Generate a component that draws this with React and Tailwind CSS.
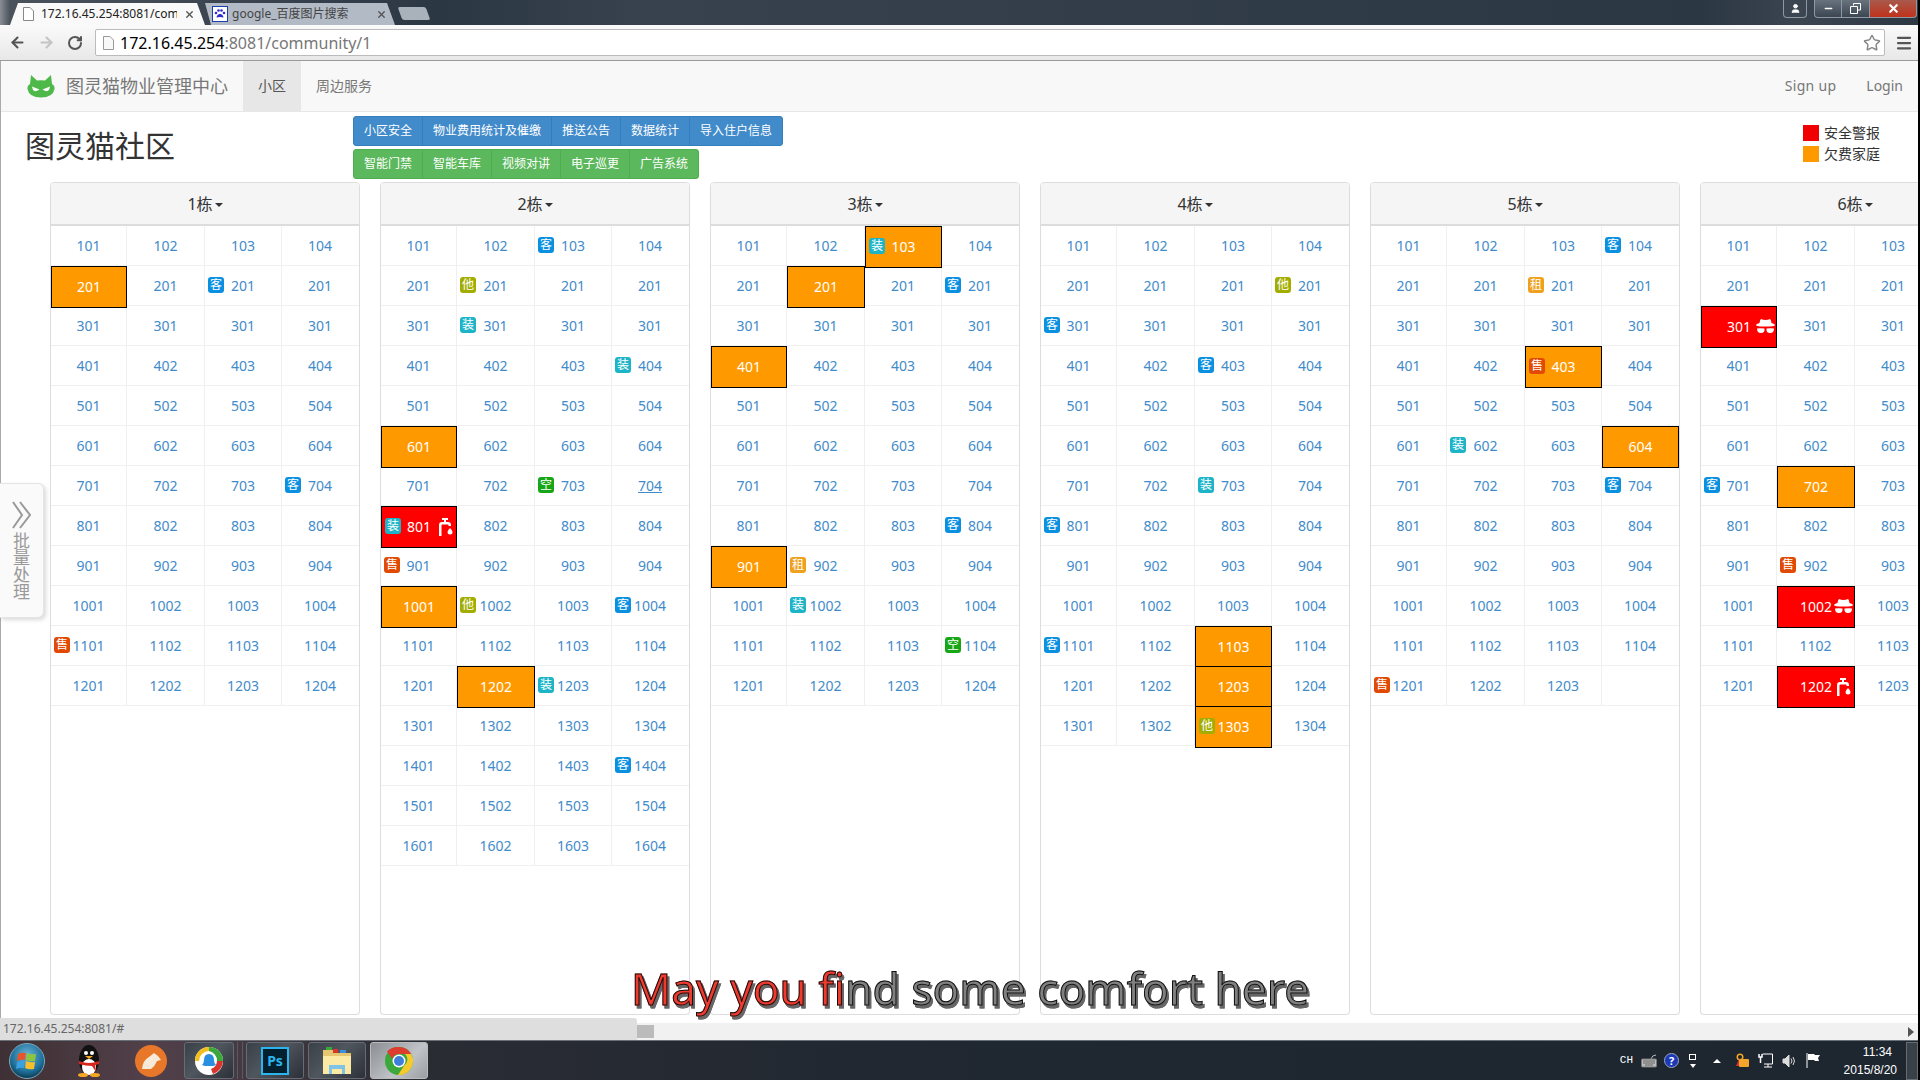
import { ArrowLeft, ArrowRight, RotateCw, Star, Menu, X, Minus, User } from 'lucide-react';

const BADGE = {
  客: 'bg-[#0b8fe0]',
  他: 'bg-[#a2ad00]',
  售: 'bg-[#e04a04]',
  装: 'bg-[#1db4c8]',
  租: 'bg-[#efa01c]',
  空: 'bg-[#16a616]',
};

const BUILDINGS = [
  {
    name: '1栋',
    rows: 12,
    cells: { '2-1': { s: 'o' }, '2-3': { b: '客' }, '7-4': { b: '客' }, '11-1': { b: '售' } },
  },
  {
    name: '2栋',
    rows: 16,
    cells: {
      '1-3': { b: '客' },
      '2-2': { b: '他' },
      '3-2': { b: '装' },
      '4-4': { b: '装' },
      '6-1': { s: 'o' },
      '7-3': { b: '空' },
      '7-4': { u: true },
      '8-1': { s: 'r', b: '装', i: 'tap' },
      '9-1': { b: '售' },
      '10-1': { s: 'o' },
      '10-2': { b: '他' },
      '10-4': { b: '客' },
      '12-2': { s: 'o' },
      '12-3': { b: '装' },
      '14-4': { b: '客' },
    },
  },
  {
    name: '3栋',
    rows: 12,
    cells: {
      '1-3': { s: 'o', b: '装' },
      '2-2': { s: 'o' },
      '2-4': { b: '客' },
      '4-1': { s: 'o' },
      '8-4': { b: '客' },
      '9-1': { s: 'o' },
      '9-2': { b: '租' },
      '10-2': { b: '装' },
      '11-4': { b: '空' },
    },
  },
  {
    name: '4栋',
    rows: 13,
    cells: {
      '2-4': { b: '他' },
      '3-1': { b: '客' },
      '4-3': { b: '客' },
      '7-3': { b: '装' },
      '8-1': { b: '客' },
      '11-1': { b: '客' },
      '11-3': { s: 'o' },
      '12-3': { s: 'o' },
      '13-3': { s: 'o', b: '他' },
    },
  },
  {
    name: '5栋',
    rows: 12,
    cells: {
      '1-4': { b: '客' },
      '2-3': { b: '租' },
      '4-3': { s: 'o', b: '售' },
      '6-2': { b: '装' },
      '6-4': { s: 'o' },
      '7-4': { b: '客' },
      '12-1': { b: '售' },
      '12-4': { empty: true },
    },
  },
  {
    name: '6栋',
    rows: 12,
    cells: {
      '3-1': { s: 'r', i: 'hat' },
      '7-1': { b: '客' },
      '7-2': { s: 'o' },
      '9-2': { b: '售' },
      '10-2': { s: 'r', i: 'hat' },
      '12-2': { s: 'r', i: 'tap' },
    },
  },
];

function roomLabel(r, c) {
  if (r === 1) return 100 + c;
  if (r === 2) return 201;
  if (r === 3) return 301;
  return r * 100 + c;
}

function CatLogo() {
  return (
    <svg width="28" height="23" viewBox="0 0 28 23">
      <path d="M3 9 L4 0 L10 5.500 Q14 5 18 5.500 L24 0 L25 9 Q28 11 27.500 14 Q26 22.500 14 22.500 Q2 22.500 .5 14 Q0 11 3 9Z" fill="#4eb948" />
      <path d="M5 11.500 L12.500 14.500 Q8 17.500 6 15Z M23 11.500 L15.500 14.500 Q20 17.500 22 15Z" fill="#fff" />
    </svg>
  );
}

function TapIcon() {
  return (
    <svg width="14" height="19" viewBox="0 0 14 19" fill="#fff">
      <path d="M0 19V8q0-3 3-3h2V3H3V1h6v2H7v2h2q3 0 3 3v1h-2.500V8q0-.5-.5-.5H3q-.5 0-.5.500v11Z" />
      <path d="M11 11q2.500 2.500 2.500 4a2.500 2.500 0 0 1-5 0q0-1.500 2.500-4Z" />
    </svg>
  );
}

function HatIcon() {
  return (
    <svg width="19" height="15" viewBox="0 0 19 15" fill="#fff">
      <path d="M5 0 Q7 1 9.500 1 Q12 1 14 0 Q15 .5 15.500 4 Q19 5 19 6 Q19 7.500 9.500 7.500 Q0 7.500 0 6 Q0 5 3.500 4 Q4 .5 5 0Z" />
      <path d="M1 9.500q3.500-.5 7.500 0 .5 4.500-3.500 4.500-4 0-4-4.500ZM10.500 9.500q4-.5 7.500 0 0 4.500-4 4.500t-3.500-4.500Z" />
    </svg>
  );
}

function Room({ row, col, cell }) {
  const { s, b, i, u, empty } = cell || {};
  const tone = s === 'o' ? 'bg-[#ff9900]' : s === 'r' ? 'bg-[#ff0000]' : '';
  const filled = s === 'o' || s === 'r';

  return (
    <div
      className={
        filled
          ? `relative z-10 h-[42px] -mb-[2px] flex items-center justify-center border border-black text-white ${tone}`
          : 'relative h-[39px] flex items-center justify-center border-r border-[#f0f0f0] text-[#428bca] last:border-r-transparent'
      }
    >
      {b && (
        <span
          className={`absolute left-[3px] top-[11px] w-4 h-4 rounded-[3px] flex items-center justify-center text-white text-xs leading-none ${BADGE[b]}`}
        >
          {b}
        </span>
      )}
      {!empty && <span className={u ? 'underline' : ''}>{roomLabel(row, col)}</span>}
      {i === 'tap' && (
        <span className="absolute right-[3px] top-[10px]">
          <TapIcon />
        </span>
      )}
      {i === 'hat' && (
        <span className="absolute right-[1px] top-[12px]">
          <HatIcon />
        </span>
      )}
    </div>
  );
}

function BuildingPanel({ building }) {
  const rows = Array.from({ length: building.rows }, (_, n) => n + 1);

  return (
    <div className="w-[310px] h-[833px] shrink-0 border border-[#ddd] rounded-[4px] bg-white shadow-[0_1px_1px_rgba(0,0,0,0.05)]">
      <div className="h-[43px] bg-[#f5f5f5] border-b-2 border-[#ddd] rounded-t-[3px] flex items-center justify-center text-base text-[#333]">
        {building.name}
        <span className="ml-0.5 mt-0.5 w-0 h-0 border-x-4 border-x-transparent border-t-4 border-t-[#333]" />
      </div>
      {rows.map((r) => (
        <div key={r} className="grid grid-cols-[76px_78px_77px_77px] h-10 border-b border-[#f0f0f0] text-sm">
          {[1, 2, 3, 4].map((c) => (
            <Room key={c} row={r} col={c} cell={building.cells[`${r}-${c}`]} />
          ))}
        </div>
      ))}
    </div>
  );
}

function ActionGroup({ items, tone }) {
  return (
    <div className="flex">
      {items.map((label) => (
        <button
          key={label}
          className={`h-[30px] px-[10px] text-xs text-white border -ml-px first:ml-0 first:rounded-l-[3px] last:rounded-r-[3px] ${tone}`}
        >
          {label}
        </button>
      ))}
    </div>
  );
}

function TabBar() {
  return (
    <div className="relative h-[25px] shrink-0 flex bg-[linear-gradient(90deg,#8a8f96_0,#4a525c_10px,#2c3744_440px,#37424e_640px,#2c3744_1700px,#3a4550_1800px,#2c3744_1920px)]">
      <div className="ml-[10px] mt-[3px] w-[195px] h-[22px] flex items-center gap-[7px] pl-[13px] pr-[10px] bg-[#f9f9f9] text-xs text-[#222] [clip-path:polygon(8px_0,calc(100%-8px)_0,100%_100%,0_100%)]">
        <svg width="11" height="14" viewBox="0 0 11 14" className="shrink-0">
          <path d="M.5.500h6.500l3.500 3.500v9.500H.5Z" fill="#fff" stroke="#888" />
        </svg>
        <span className="w-[136px] overflow-hidden whitespace-nowrap">172.16.45.254:8081/com</span>
        <X size={11} strokeWidth={3} className="text-[#555] shrink-0" />
      </div>
      <div className="mt-[3px] w-[190px] h-[22px] flex items-center pl-[7px] pr-[8px] bg-[#b2bac6] text-xs text-[#444] [clip-path:polygon(0_0,calc(100%-8px)_0,100%_100%,6px_100%)]">
        <svg width="16" height="16" viewBox="0 0 16 16" className="shrink-0">
          <rect x=".5" y=".5" width="15" height="15" fill="#fff" stroke="#1c3fb0" />
          <path d="M8 8q3 0 3.500 3.500Q8 10.500 4.500 11.500 5 8 8 8Z" fill="#2a2ad0" />
          <circle cx="4" cy="7" r="1.300" fill="#2a2ad0" />
          <circle cx="6.500" cy="4.500" r="1.300" fill="#2a2ad0" />
          <circle cx="9.500" cy="4.500" r="1.300" fill="#2a2ad0" />
          <circle cx="12" cy="7" r="1.300" fill="#2a2ad0" />
        </svg>
        <span className="ml-[4px] flex-1 whitespace-nowrap">google_百度图片搜索</span>
        <X size={11} strokeWidth={3} className="text-[#555] shrink-0" />
      </div>
      <div className="ml-[5px] mt-[7px] w-[28px] h-[13px] bg-[#a9b1ba] rounded-[2px] skew-x-[20deg]" />
      <div className="absolute right-[1px] top-0 flex items-start text-white">
        <div className="w-[24px] h-[18px] mr-[7px] border border-t-0 border-[#8e98a2] rounded-b-[4px] flex items-center justify-center bg-[#3b4652]">
          <User size={11} fill="#fff" />
        </div>
        <div className="w-[28px] h-[18px] border border-t-0 border-[#8e98a2] rounded-bl-[4px] flex items-center justify-center bg-[linear-gradient(#69737e,#3b4652)]">
          <Minus size={11} strokeWidth={3} />
        </div>
        <div className="w-[27px] h-[18px] border-b border-[#8e98a2] flex items-center justify-center bg-[linear-gradient(#69737e,#3b4652)]">
          <svg width="11" height="11" viewBox="0 0 11 11" fill="none" stroke="#fff">
            <path d="M3.500 2.500V.5h7v6.500H8" />
            <path d="M.5 3.500h7v7h-7Z" />
          </svg>
        </div>
        <div className="w-[48px] h-[18px] border border-t-0 border-[#8e98a2] rounded-br-[4px] flex items-center justify-center bg-[linear-gradient(#a85a4c,#c0321c)]">
          <X size={13} strokeWidth={4} />
        </div>
      </div>
    </div>
  );
}

function Toolbar() {
  return (
    <div className="h-[36px] shrink-0 flex items-center bg-[linear-gradient(#fafafa,#e8e8e8)] border-b border-[#9a9a9a]">
      <div className="w-[95px] flex items-center pl-[9px] gap-[12px] shrink-0">
        <ArrowLeft size={17} strokeWidth={3} className="text-[#555]" />
        <ArrowRight size={17} strokeWidth={3} className="text-[#c4c4c4]" />
        <RotateCw size={16} strokeWidth={3} className="text-[#555]" />
      </div>
      <div className="w-[1790px] h-[27px] flex items-center pl-[7px] pr-[3px] bg-white border border-[#bbb] rounded-[2px] text-base leading-none">
        <svg width="11" height="14" viewBox="0 0 11 14" className="shrink-0">
          <path d="M.5.500h6.500l3.500 3.500v9.500H.5Z" fill="#f8f8f8" stroke="#999" />
        </svg>
        <span className="ml-[6px] text-black">172.16.45.254</span>
        <span className="text-[#777]">:8081/community/1</span>
        <Star size={18} className="ml-auto text-[#888]" />
      </div>
      <Menu size={18} strokeWidth={3} className="ml-[10px] text-[#555]" />
    </div>
  );
}

function Navbar() {
  return (
    <nav className="h-[51px] shrink-0 flex items-stretch bg-[#f8f8f8] border-b border-[#e7e7e7] text-sm text-[#777]">
      <div className="flex items-center pl-[26px] w-[242px]">
        <CatLogo />
        <span className="ml-[11px] text-lg whitespace-nowrap">图灵猫物业管理中心</span>
      </div>
      <a className="px-[15px] flex items-center bg-[#e7e7e7] text-[#555]">小区</a>
      <a className="px-[15px] flex items-center">周边服务</a>
      <a className="ml-auto px-[15px] flex items-center tracking-[0.3px]">Sign up</a>
      <a className="px-[15px] flex items-center">Login</a>
    </nav>
  );
}

function PageHead() {
  return (
    <div className="h-[70px] shrink-0 flex">
      <h1 className="w-[352px] pl-[24px] pt-[14px] text-[30px] leading-[40px] text-[#333]">图灵猫社区</h1>
      <div className="pt-[4px] flex flex-col gap-[3px]">
        <ActionGroup
          tone="bg-[#428bca] border-[#357ebd]"
          items={['小区安全', '物业费用统计及催缴', '推送公告', '数据统计', '导入住户信息']}
        />
        <ActionGroup
          tone="bg-[#5cb85c] border-[#4cae4c]"
          items={['智能门禁', '智能车库', '视频对讲', '电子巡更', '广告系统']}
        />
      </div>
      <div className="ml-auto w-[115px] pt-[13px] text-sm text-[#333] flex flex-col gap-[5px]">
        <div className="flex items-center gap-[5px] h-4">
          <span className="w-4 h-4 bg-[#f00000]" />
          安全警报
        </div>
        <div className="flex items-center gap-[5px] h-4">
          <span className="w-4 h-4 bg-[#ff9900]" />
          欠费家庭
        </div>
      </div>
    </div>
  );
}

function Tile({ active, children, className = '' }) {
  return (
    <div
      className={`h-[37px] flex items-center justify-center rounded-[3px] border ${
        active
          ? 'border-[#bbb] bg-[linear-gradient(135deg,#8a8e92,#c0c4c8_60%,#9a9ea2)]'
          : 'border-[#666c74] bg-[linear-gradient(135deg,#3a4048,#50565e_45%,#2c3038)]'
      } ${className}`}
    >
      {children}
    </div>
  );
}

function Taskbar() {
  return (
    <div className="h-10 shrink-0 flex items-center bg-[linear-gradient(90deg,#3e3034_0,#52404a_150px,#2a2c34_420px,#1f2730_1000px,#1e2630_1920px)] border-t border-[#6a7078]">
      <svg width="36" height="36" viewBox="0 0 36 36" className="ml-[9px] shrink-0">
        <defs>
          <radialGradient id="orb" cx="50%" cy="35%" r="65%">
            <stop offset="0%" stopColor="#6fb6d8" />
            <stop offset="70%" stopColor="#1d6f9a" />
            <stop offset="100%" stopColor="#0c3a50" />
          </radialGradient>
        </defs>
        <circle cx="18" cy="18" r="17.500" fill="url(#orb)" stroke="#7fa8bc" />
        <path d="M9 11q4-2 8-1l-1 7q-4-1-8 1Z" fill="#e8552c" />
        <path d="M18 10q4 2 9 1l-1 7q-5 1-9-1Z" fill="#8cc63f" />
        <path d="M8 19q4-2 8-1l-1 7q-4-1-8 1Z" fill="#3aa0e0" />
        <path d="M17 18q4 2 9 1l-1 7q-5 1-9-1Z" fill="#f6c02c" />
      </svg>
      <svg width="28" height="33" viewBox="0 0 28 33" className="ml-[30px] shrink-0">
        <ellipse cx="14" cy="16" rx="10" ry="15" fill="#111" />
        <ellipse cx="14" cy="23" rx="7" ry="8" fill="#fff" />
        <circle cx="11" cy="9" r="2" fill="#fff" />
        <circle cx="17" cy="9" r="2" fill="#fff" />
        <path d="M10 12h8l-4 3Z" fill="#f5a623" />
        <path d="M4 17q10 4 20 0v3q-3 1-4 1l1 7-4-6q-6 0-13-2Z" fill="#d8261c" />
        <ellipse cx="8" cy="31" rx="5" ry="2" fill="#f5a623" />
        <ellipse cx="20" cy="31" rx="5" ry="2" fill="#f5a623" />
      </svg>
      <svg width="32" height="32" viewBox="0 0 32 32" className="ml-[32px] shrink-0">
        <ellipse cx="16" cy="16" rx="16" ry="16" fill="#e8772a" />
        <path d="M7 24q1-9 7-12l5-4 4 3 3 4-4 1q-2 5-6 8Z" fill="#f7ead8" />
      </svg>
      <Tile className="ml-[17px] w-[50px] shrink-0">
        <svg width="30" height="30" viewBox="0 0 30 30">
          <circle cx="15" cy="15" r="14" fill="#fff" />
          <path d="M15 1a14 14 0 0 1 14 14h-6A10 10 0 0 0 15 5Z" fill="#3aa83a" />
          <path d="M29 15a14 14 0 0 1-10 13l-2-5a9 9 0 0 0 6-8Z" fill="#d8332c" />
          <path d="M1 15A14 14 0 0 1 15 1v4A10 10 0 0 0 5 15Z" fill="#f2c01e" />
          <path d="M15 8q5 0 5 6 0 3 2 5l-3 1h-8l-3-1q2-2 2-5 0-6 5-6Z" fill="#2a8fe0" />
        </svg>
      </Tile>
      <div className="ml-[3px] w-[6px] h-[37px] border-x border-[#565c64]" />
      <Tile className="ml-[3px] w-[58px] shrink-0">
        <div className="w-[28px] h-[28px] bg-[#04202e] border-2 border-[#2bb5ec] flex items-center justify-center text-[#2bb5ec] text-sm font-bold leading-none">
          Ps
        </div>
      </Tile>
      <Tile className="ml-[4px] w-[58px] shrink-0">
        <svg width="32" height="30" viewBox="0 0 32 30">
          <path d="M2 4h11l3 3h14v21H2Z" fill="#e6c770" />
          <path d="M2 10h28v18H2Z" fill="#fbe9a4" />
          <path d="M5 1h6v3H5Z" fill="#3aa83a" />
          <path d="M12 3h5v4h-5Z" fill="#d8332c" />
          <path d="M19 4h6v3h-6Z" fill="#3a8fe0" />
          <path d="M8 19h16v9h-3v-5H11v5H8Z" fill="#7fc4e8" />
        </svg>
      </Tile>
      <Tile active className="ml-[4px] w-[58px] shrink-0">
        <svg width="30" height="30" viewBox="0 0 30 30">
          <circle cx="15" cy="15" r="14" fill="#3aa83a" />
          <path d="M15 1a14 14 0 0 1 12.100 7H15a7 7 0 0 0-6.700 5L3 5.500A14 14 0 0 1 15 1Z" fill="#dd3c2e" />
          <path d="M27.100 8A14 14 0 0 1 14 29l6.500-10a7 7 0 0 0 .5-11Z" fill="#f6c92c" />
          <circle cx="15" cy="15" r="6.500" fill="#fff" />
          <circle cx="15" cy="15" r="5" fill="#3f7fdc" />
        </svg>
      </Tile>
      <div className="ml-auto flex items-center text-white">
        <span className="text-[11px] font-['Liberation_Mono',monospace]">CH</span>
        <svg width="16" height="14" viewBox="0 0 16 14" className="ml-[8px]">
          <path d="M10 5Q11 1 15 1" fill="none" stroke="#bbb" />
          <rect x="0.500" y="5" width="15" height="8" rx="1" fill="#bbb" stroke="#777" />
          <path d="M2 7h12M2 9h12M4 11h8" stroke="#666" />
        </svg>
        <span className="ml-[7px] w-[15px] h-[15px] rounded-full bg-[#1c38b8] border border-[#9ab] flex items-center justify-center text-[11px] font-bold leading-none">
          ?
        </span>
        <span className="ml-[10px] flex flex-col items-center gap-[4px]">
          <span className="w-[7px] h-[6px] border border-white" />
          <span className="w-0 h-0 border-x-[3px] border-x-transparent border-t-[4px] border-t-white" />
        </span>
        <span className="ml-[17px] w-0 h-0 border-x-[4px] border-x-transparent border-b-[4px] border-b-white" />
        <svg width="15" height="16" viewBox="0 0 15 16" className="ml-[13px]">
          <circle cx="6" cy="4" r="3.500" fill="#f2a72c" />
          <circle cx="6" cy="4" r="2" fill="#222" />
          <path d="M2 13l3-7h3l1 7Z" fill="#d8332c" />
          <rect x="5" y="6" width="10" height="8" rx="1" fill="#f2a72c" />
        </svg>
        <svg width="15" height="15" viewBox="0 0 15 15" className="ml-[9px]" fill="none" stroke="#fff">
          <path d="M4.500 1H14.500V11H6M10 11v3M6 14h8" />
          <path d="M1 1v3h3V1M2.500 4v6" strokeWidth="1.500" />
        </svg>
        <svg width="14" height="14" viewBox="0 0 14 14" className="ml-[9px]" fill="none" stroke="#ddd">
          <path d="M1 5h2l4-4v12l-4-4H1Z" fill="#ddd" />
          <path d="M9 4.500q2 2.500 0 5M11 3q3 4 0 8" />
        </svg>
        <svg width="14" height="15" viewBox="0 0 14 15" className="ml-[10px]">
          <path d="M1 0v15" stroke="#fff" />
          <path d="M2 1h6l1 1h5l-2 3 1 3H9L8 7H2Z" fill="#fff" />
        </svg>
        <div className="ml-[17px] w-[60px] flex flex-col items-end text-xs leading-[18px] whitespace-nowrap font-['Liberation_Sans','Noto_Sans_CJK_SC',sans-serif]">
          <span className="pr-[5px]">11:34</span>
          <span>2015/8/20</span>
        </div>
        <div className="ml-[9px] w-[12px] h-[38px] border border-[#666c74] bg-[#3a4048]" />
      </div>
    </div>
  );
}

export default function App() {
  return (
    <div className="relative w-screen h-screen overflow-hidden flex flex-col bg-white border-r-2 border-black font-['Noto_Sans','Noto_Sans_CJK_SC',sans-serif]">
      <TabBar />
      <Toolbar />
      <div className="flex-1 min-h-0 flex flex-col border-l border-[#aaa]">
        <Navbar />
        <PageHead />
        <div className="pl-[49px] flex gap-5 overflow-hidden shrink-0">
          {BUILDINGS.map((b) => (
            <BuildingPanel key={b.name} building={b} />
          ))}
        </div>
        {/* page scrollbar */}
        <div className="mt-[8px] h-[17px] shrink-0 flex items-center pl-[636px] pr-[4px] bg-[#f1f1f1]">
          <div className="w-[17px] h-[13px] bg-[#bbb]" />
          <span className="ml-auto w-0 h-0 border-y-[5px] border-y-transparent border-l-[6px] border-l-[#555]" />
        </div>
      </div>
      <Taskbar />

      {/* batch side tab */}
      <div className="absolute left-0 top-[483px] w-[44px] h-[135px] flex flex-col items-center bg-[#fafafa] border border-l-0 border-[#e4e4e4] rounded-r-[6px] shadow-[2px_2px_4px_rgba(0,0,0,0.15)] text-[17px] leading-[17px] text-[#999]">
        <svg width="20" height="28" viewBox="0 0 20 28" fill="none" stroke="#999" strokeWidth="2" className="mt-[17px] mb-[3px]">
          <path d="M1 1l9 13-9 13M8 1l10 13-10 13" />
        </svg>
        <span>批</span>
        <span>量</span>
        <span>处</span>
        <span>理</span>
      </div>

      {/* link status bubble */}
      <div className="absolute left-0 top-[1018px] w-[637px] h-[22px] flex items-center pl-[3px] bg-[#dedede] rounded-tr-[3px] text-xs text-[#666]">
        172.16.45.254:8081/#
      </div>

      {/* karaoke caption */}
      <div className="absolute left-[631px] top-[957px] text-[44.3px] leading-[62px] whitespace-nowrap bg-clip-text text-transparent bg-[linear-gradient(90deg,#f03a2e_212px,#808080_212px)] [-webkit-text-stroke:1px_#111] drop-shadow-[2px_3px_0_#666]">
        May you find some comfort here
      </div>
    </div>
  );
}
